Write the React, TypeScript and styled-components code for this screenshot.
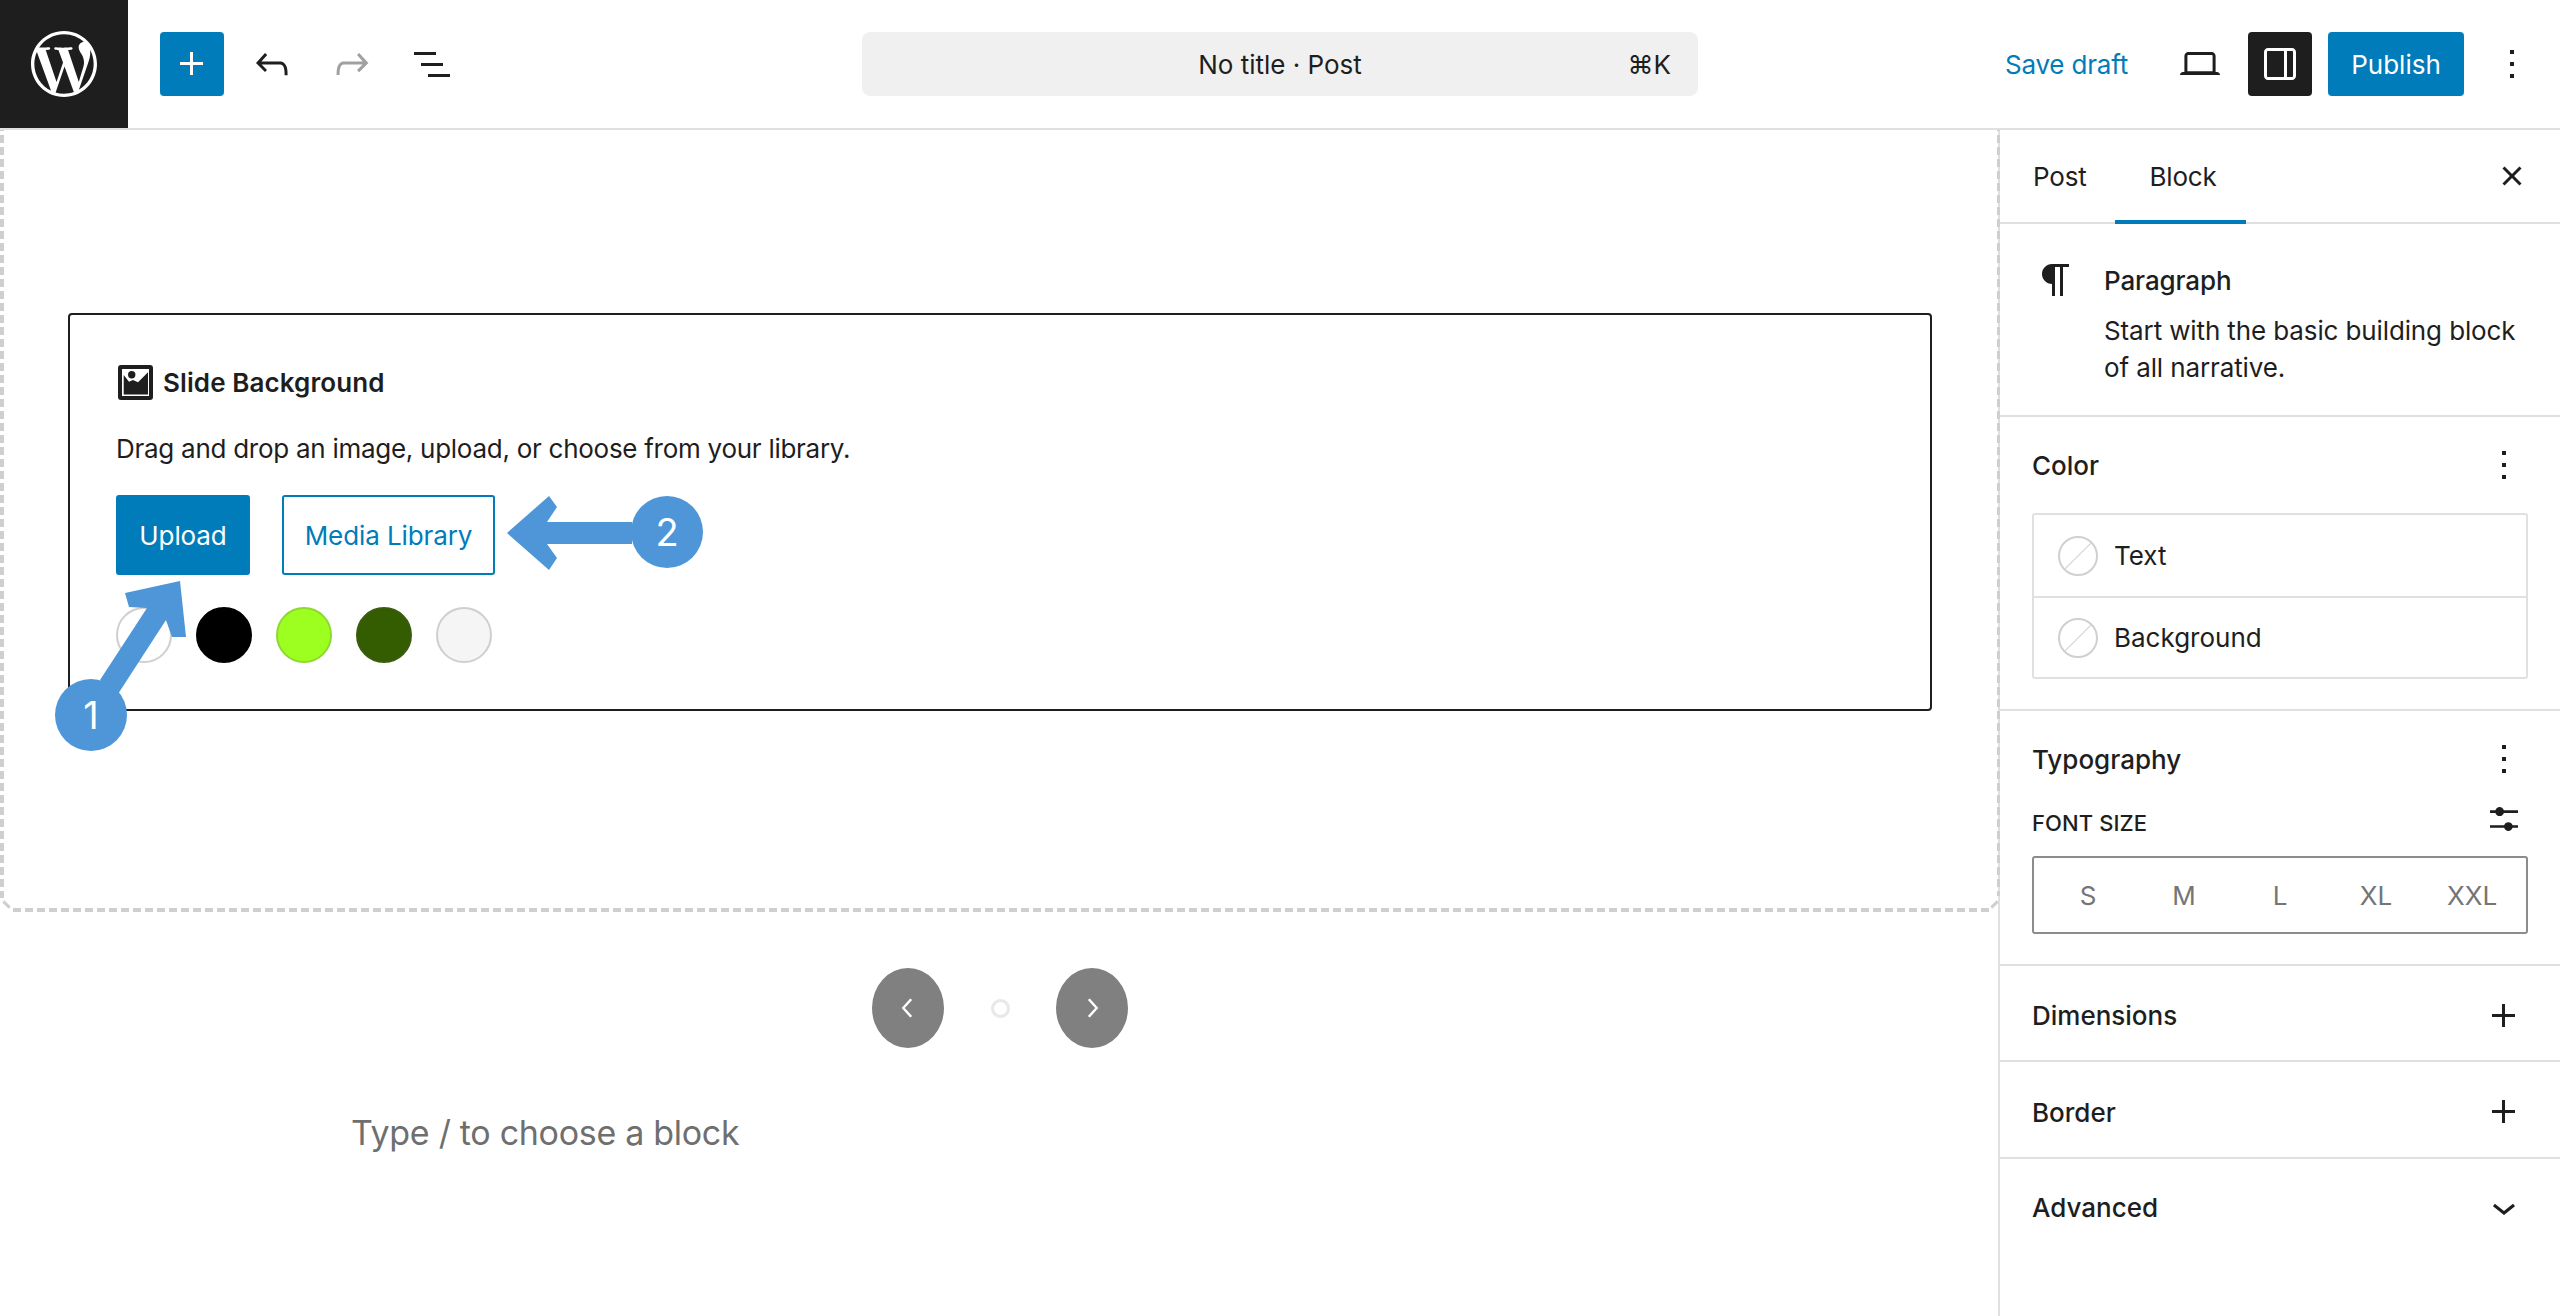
import React from 'react'
import styled, { createGlobalStyle } from 'styled-components'
import { SiWordpress } from 'react-icons/si'

const GlobalStyle = createGlobalStyle`
  html, body {
    margin: 0;
    width: 2560px;
    height: 1316px;
    overflow: hidden;
    background: #fff;
    color: #1e1e1e;
    font-family: Inter, "Liberation Sans", sans-serif;
    font-size: 26px;
  }
  * { box-sizing: border-box; }
`

const BLUE = '#007cba'
const DARK = '#1e1e1e'
const LINE = '#e0e0e0'
const DASH = '#cfcfcf'
const ANNOTATION = '#4e96d8'

const Page = styled.div`
  position: relative;
  width: 2560px;
  height: 1316px;
  display: grid;
  grid-template-rows: 130px 1fr;
  overflow: hidden;
`

const Header = styled.header`
  display: grid;
  grid-template-columns: 1fr 836px 1fr;
  align-items: center;
  border-bottom: 2px solid ${LINE};
`

const HeaderLeft = styled.div`
  display: flex;
  align-items: center;
  gap: 32px;
`

const HeaderRight = styled.div`
  display: flex;
  align-items: center;
  justify-content: flex-end;
  gap: 16px;
  padding-right: 16px;
`

const LogoBox = styled.div`
  width: 128px;
  height: 128px;
  background: ${DARK};
  color: #fff;
  display: flex;
  align-items: center;
  justify-content: center;
  font-size: 66px;
`

const ToolGroup = styled.div`
  display: flex;
  gap: 16px;
`

const IconButton = styled.button<{ $variant?: 'primary' | 'dark' | 'plain' }>`
  width: 64px;
  height: 64px;
  padding: 0;
  border: 0;
  border-radius: 4px;
  display: flex;
  align-items: center;
  justify-content: center;
  background: ${p => (p.$variant === 'primary' ? BLUE : p.$variant === 'dark' ? DARK : 'transparent')};
  color: ${p => (p.$variant === 'primary' || p.$variant === 'dark' ? '#fff' : DARK)};
`

const Glyph = styled.svg<{ $size?: number; $muted?: boolean }>`
  width: ${p => p.$size ?? 48}px;
  height: ${p => p.$size ?? 48}px;
  flex: none;
  display: block;
  fill: currentColor;
  color: ${p => (p.$muted ? '#a0a0a0' : 'inherit')};
`

const CommandCenter = styled.div`
  position: relative;
  height: 64px;
  border-radius: 8px;
  background: #f0f0f0;
  display: flex;
  align-items: center;
  justify-content: center;
  font-size: 26px;
`

const Shortcut = styled.span`
  position: absolute;
  right: 27px;
  top: 50%;
  transform: translateY(-50%);
`

const SaveDraft = styled.span`
  color: ${BLUE};
  padding: 0 24px;
  font-size: 26px;
  letter-spacing: -0.2px;
`

const PublishButton = styled.button`
  width: 136px;
  height: 64px;
  border: 0;
  border-radius: 4px;
  background: ${BLUE};
  color: #fff;
  font: inherit;
  font-size: 26px;
  padding: 0;
`

const Body = styled.div`
  display: grid;
  grid-template-columns: 1998px 562px;
  min-height: 0;
`

const Canvas = styled.main`
  display: flex;
  flex-direction: column;
  min-width: 0;
`

const SlideFrame = styled.section`
  position: relative;
  z-index: 1;
  flex: none;
  width: 2000px;
  height: 782px;
  padding: 183px 68px 0 68px;
  background:
    repeating-linear-gradient(to bottom, ${DASH} 0 1px, transparent 1px 5px, ${DASH} 5px 12px) left top / 4px calc(100% - 14px) no-repeat,
    repeating-linear-gradient(to bottom, ${DASH} 0 1px, transparent 1px 5px, ${DASH} 5px 12px) right top / 3px calc(100% - 16px) no-repeat,
    repeating-linear-gradient(to right, ${DASH} 0 8px, transparent 8px 12px) 13px bottom / calc(100% - 23px) 4px no-repeat;

  &::before, &::after {
    content: '';
    position: absolute;
    bottom: 6px;
    width: 9px;
    height: 3px;
    background: ${DASH};
  }
  &::before { left: 2px; transform: rotate(45deg); }
  &::after { right: 1px; transform: rotate(-45deg); }
`

const SlideCard = styled.div`
  height: 398px;
  border: 2px solid ${DARK};
  border-radius: 4px;
  background: #fff;
  padding: 47px 46px 0;
`

const CardTitle = styled.div`
  display: flex;
  align-items: center;
  gap: 10px;
  height: 40px;
  padding-left: 2px;
  font-weight: 600;
  font-size: 26px;
  letter-spacing: 0.1px;
`

const CardText = styled.p`
  margin: 27px 0 26px;
  line-height: 40px;
  font-size: 26px;
  letter-spacing: -0.27px;
`

const CardActions = styled.div`
  display: flex;
  gap: 32px;
`

const ActionButton = styled.button<{ $outline?: boolean }>`
  height: 80px;
  padding: 0;
  width: ${p => (p.$outline ? 213 : 134)}px;
  border-radius: 3px;
  font: inherit;
  font-size: 26px;
  letter-spacing: -0.1px;
  border: ${p => (p.$outline ? `2px solid ${BLUE}` : '0')};
  background: ${p => (p.$outline ? '#fff' : BLUE)};
  color: ${p => (p.$outline ? BLUE : '#fff')};
`

const Swatches = styled.div`
  display: flex;
  gap: 24px;
  margin-top: 32px;
`

const Swatch = styled.span<{ $fill: string; $edge: string }>`
  width: 56px;
  height: 56px;
  border-radius: 50%;
  background: ${p => p.$fill};
  border: 2px solid ${p => p.$edge};
`

const SliderNav = styled.nav`
  display: flex;
  align-items: center;
  width: 256px;
  height: 80px;
  margin: 56px 0 0 872px;
  justify-content: space-between;
`

const RoundButton = styled.button`
  width: 72px;
  height: 80px;
  padding: 0;
  border: 0;
  border-radius: 50%;
  background: #808080;
  color: #fff;
  display: flex;
  align-items: center;
  justify-content: center;
`

const Dot = styled.span`
  width: 19px;
  height: 19px;
  border-radius: 50%;
  border: 3px solid #e8e8e8;
`

const Placeholder = styled.p`
  margin: 61px 0 0 351px;
  line-height: 48px;
  font-size: 34px;
  letter-spacing: -0.3px;
  color: #6f6f6f;
`

const Sidebar = styled.aside`
  border-left: 2px solid ${LINE};
  min-height: 0;
`

const Tabs = styled.div`
  display: flex;
  align-items: flex-start;
  height: 94px;
  border-bottom: 2px solid ${LINE};
  padding-left: 1px;
  letter-spacing: -0.2px;
`

const Tab = styled.div<{ $active?: boolean }>`
  display: flex;
  align-items: center;
  padding: ${p => (p.$active ? '2px 29px 0 35px' : '0 28px 0 32px')};
  height: ${p => (p.$active ? 94 : 92)}px;
  border-bottom: ${p => (p.$active ? `4px solid ${BLUE}` : '0')};
`

const TabClose = styled(IconButton)`
  margin: 14px 16px 0 auto;
`

const BlockCard = styled.div`
  display: flex;
  gap: 24px;
  height: 193px;
  padding: 32px 32px 0;
  border-bottom: 2px solid ${LINE};
`

const BlockInfo = styled.div`
  line-height: 37px;
  padding-top: 6px;
  letter-spacing: -0.12px;
`

const BlockName = styled.div`
  font-weight: 500;
  margin-bottom: 13px;
`

const Panel = styled.section<{ $height: number }>`
  height: ${p => p.$height}px;
  padding: 0 32px;
  border-bottom: 2px solid ${LINE};
`

const PanelHeader = styled.div<{ $height: number }>`
  display: flex;
  align-items: center;
  justify-content: space-between;
  height: ${p => p.$height}px;
  font-weight: 500;
`

const CollapsedHeader = styled(PanelHeader)`
  padding-top: 5px;
`

const LastHeader = styled(PanelHeader)`
  padding: 0 32px;
`

const PanelAction = styled.div`
  width: 48px;
  height: 48px;
  display: flex;
  align-items: center;
  justify-content: center;
  color: ${DARK};
`

const SliderAction = styled(PanelAction)`
  margin-top: -8px;
`

const ColorList = styled.div`
  border: 2px solid ${LINE};
  border-radius: 3px;
`

const ColorRow = styled.div`
  display: flex;
  align-items: center;
  gap: 16px;
  height: 81px;
  padding-left: 24px;

  & + & { border-top: 2px solid ${LINE}; }
`

const EmptySwatch = styled.span`
  position: relative;
  width: 40px;
  height: 40px;
  border-radius: 50%;
  border: 2px solid #d0d0d0;
  overflow: hidden;

  &::after {
    content: '';
    position: absolute;
    left: 50%;
    top: 50%;
    width: 48px;
    height: 1px;
    background: #d0d0d0;
    transform: translate(-50%, -50%) rotate(-45deg);
  }
`

const FontLabelRow = styled.div`
  display: flex;
  align-items: center;
  justify-content: space-between;
  height: 32px;
  font-size: 22px;
  font-weight: 500;
  letter-spacing: 0.1px;
  text-transform: uppercase;
`

const SizePicker = styled.div`
  display: grid;
  grid-template-columns: repeat(5, 96px);
  align-items: center;
  height: 78px;
  margin-top: 17px;
  padding-left: 6px;
  border: 2px solid #8c8c8c;
  border-radius: 3px;
`

const SizeOption = styled.span`
  text-align: center;
  color: #757575;
  font-size: 26px;
`

const ArrowOne = styled.svg`
  position: absolute;
  left: 90px;
  top: 570px;
  width: 110px;
  height: 130px;
  fill: ${ANNOTATION};
  z-index: 2;
`

const ArrowTwo = styled.svg`
  position: absolute;
  left: 500px;
  top: 490px;
  width: 140px;
  height: 90px;
  fill: ${ANNOTATION};
  z-index: 2;
`

const Badge = styled.span<{ $left: number; $top: number }>`
  position: absolute;
  left: ${p => p.$left}px;
  top: ${p => p.$top}px;
  z-index: 2;
  width: 72px;
  height: 72px;
  border-radius: 50%;
  background: ${ANNOTATION};
  color: #fff;
  font-size: 38px;
  display: flex;
  align-items: center;
  justify-content: center;
`

const paths = {
  plus: 'M11 12.5V17.5H12.5V12.5H17.5V11H12.5V6H11V11H6V12.5H11Z',
  undo: 'M18.3 11.7c-.6-.6-1.4-.9-2.3-.9H6.7l2.9-3.3-1.1-1-4.5 5L8.5 16l1-1-2.7-2.7H16c.5 0 .9.2 1.3.5 1 1 1 3.4 1 4.5v.3h1.5v-.2c0-1.5 0-4.3-1.5-5.7z',
  redo: 'M15.6 6.5l-1.1 1 2.9 3.3H8c-.9 0-1.7.3-2.3.9-1.4 1.5-1.4 4.2-1.4 5.6v.2h1.5v-.3c0-1.1 0-3.5 1-4.5.3-.3.7-.5 1.3-.5h9.2L14.5 15l1.1 1.1 4.6-4.6-4.6-5z',
  list: 'M3 6h11v1.5H3V6Zm3.5 5.5h11V13h-11v-1.5ZM21 17H10v1.5h11V17Z',
  laptop: 'M20.5 16h-.7V8c0-1.1-.9-2-2-2H6.2c-1.1 0-2 .9-2 2v8h-.7c-.8 0-1.5.7-1.5 1.5h20c0-.8-.7-1.5-1.5-1.5zM5.7 8c0-.3.2-.5.5-.5h11.6c.3 0 .5.2.5.5v7.6H5.7V8z',
  drawer: 'M18 4H6c-1.1 0-2 .9-2 2v12c0 1.1.9 2 2 2h12c1.1 0 2-.9 2-2V6c0-1.1-.9-2-2-2zm-4 14.5H6c-.3 0-.5-.2-.5-.5V6c0-.3.2-.5.5-.5h8v13zm4.5-.5c0 .3-.2.5-.5.5h-2.5v-13H18c.3 0 .5.2.5.5v12z',
  more: 'M13 19h-2v-2h2v2zm0-6h-2v-2h2v2zm0-6h-2V5h2v2z',
  close: 'M12 13.06l3.712 3.713 1.061-1.06L13.061 12l3.712-3.712-1.06-1.06L12 10.938 8.288 7.227l-1.061 1.06L10.939 12l-3.712 3.712 1.06 1.061L12 13.061z',
  paragraph: 'm9.99609 14v-.2251l.00391.0001v6.225h1.5v-14.5h2.5v14.5h1.5v-14.5h3v-1.5h-8.50391c-2.76142 0-5 2.23858-5 5 0 2.7614 2.23858 5 5 5z',
  sliders: 'M14.5 13.8c-1.1 0-2.1.7-2.4 1.8H4V17h8.1c.3 1 1.3 1.8 2.4 1.8s2.1-.7 2.4-1.8H20v-1.5h-3.1c-.3-1-1.3-1.7-2.4-1.7zM11.9 7c-.3-1-1.3-1.8-2.4-1.8S7.4 6 7.1 7H4v1.5h3.1c.3 1 1.3 1.8 2.4 1.8s2.1-.7 2.4-1.8H20V7h-8.1z',
  chevronDown: 'M17.5 11.6L12 16l-5.5-4.4.9-1.2L12 14l4.5-3.6 1 1.2z',
  chevronLeft: 'M14.6 7l-1.2-1L8 12l5.4 6 1.2-1-4.6-5z',
  chevronRight: 'M10.6 6L9.4 7l4.6 5-4.6 5 1.2 1 5.4-6z',
}

type IconProps = { name: keyof typeof paths; size?: number; muted?: boolean }

const Icon = ({ name, size, muted }: IconProps) => (
  <Glyph viewBox="0 0 24 24" $size={size} $muted={muted}>
    <path d={paths[name]} />
  </Glyph>
)

const BackgroundIcon = () => (
  <Glyph viewBox="0 0 35 35" $size={35}>
    <path fillRule="evenodd" d="M3 0h29a3 3 0 0 1 3 3v29a3 3 0 0 1-3 3H3a3 3 0 0 1-3-3V3a3 3 0 0 1 3-3Zm1 4v27h27V4H4Z" />
    <circle cx="13.7" cy="9.7" r="3.7" />
    <path d="M5.7 10 11 16.7l4-1.7 5 2.3L30 7.3V29.5H5.7Z" />
  </Glyph>
)

const swatches = [
  { fill: '#ffffff', edge: '#cfcfcf' },
  { fill: '#000000', edge: '#000000' },
  { fill: '#9dff20', edge: '#8fd832' },
  { fill: '#345c00', edge: '#3a5c10' },
  { fill: '#f5f5f5', edge: '#cfcfcf' },
]

const App = () => (
  <Page>
    <GlobalStyle />
    <Header>
      <HeaderLeft>
        <LogoBox>
          <SiWordpress />
        </LogoBox>
        <ToolGroup>
          <IconButton $variant="primary"><Icon name="plus" /></IconButton>
          <IconButton><Icon name="undo" /></IconButton>
          <IconButton><Icon name="redo" muted /></IconButton>
          <IconButton><Icon name="list" /></IconButton>
        </ToolGroup>
      </HeaderLeft>
      <CommandCenter>
        No title · Post
        <Shortcut>⌘K</Shortcut>
      </CommandCenter>
      <HeaderRight>
        <SaveDraft>Save draft</SaveDraft>
        <IconButton><Icon name="laptop" /></IconButton>
        <IconButton $variant="dark"><Icon name="drawer" /></IconButton>
        <PublishButton>Publish</PublishButton>
        <IconButton><Icon name="more" /></IconButton>
      </HeaderRight>
    </Header>
    <Body>
      <Canvas>
        <SlideFrame>
          <SlideCard>
            <CardTitle><BackgroundIcon />Slide Background</CardTitle>
            <CardText>Drag and drop an image, upload, or choose from your library.</CardText>
            <CardActions>
              <ActionButton>Upload</ActionButton>
              <ActionButton $outline>Media Library</ActionButton>
            </CardActions>
            <Swatches>
              {swatches.map(s => <Swatch key={s.fill} $fill={s.fill} $edge={s.edge} />)}
            </Swatches>
          </SlideCard>
        </SlideFrame>
        <SliderNav>
          <RoundButton><Icon name="chevronLeft" size={38} /></RoundButton>
          <Dot />
          <RoundButton><Icon name="chevronRight" size={38} /></RoundButton>
        </SliderNav>
        <Placeholder>Type / to choose a block</Placeholder>
      </Canvas>
      <Sidebar>
        <Tabs>
          <Tab>Post</Tab>
          <Tab $active>Block</Tab>
          <TabClose><Icon name="close" /></TabClose>
        </Tabs>
        <BlockCard>
          <Icon name="paragraph" />
          <BlockInfo>
            <BlockName>Paragraph</BlockName>
            Start with the basic building block of all narrative.
          </BlockInfo>
        </BlockCard>
        <Panel $height={294}>
          <PanelHeader $height={96}>
            Color
            <PanelAction><Icon name="more" /></PanelAction>
          </PanelHeader>
          <ColorList>
            <ColorRow><EmptySwatch />Text</ColorRow>
            <ColorRow><EmptySwatch />Background</ColorRow>
          </ColorList>
        </Panel>
        <Panel $height={255}>
          <PanelHeader $height={96}>
            Typography
            <PanelAction><Icon name="more" /></PanelAction>
          </PanelHeader>
          <FontLabelRow>
            Font size
            <SliderAction><Icon name="sliders" size={42} /></SliderAction>
          </FontLabelRow>
          <SizePicker>
            <SizeOption>S</SizeOption>
            <SizeOption>M</SizeOption>
            <SizeOption>L</SizeOption>
            <SizeOption>XL</SizeOption>
            <SizeOption>XXL</SizeOption>
          </SizePicker>
        </Panel>
        <Panel $height={96}>
          <CollapsedHeader $height={94}>
            Dimensions
            <PanelAction><Icon name="plus" /></PanelAction>
          </CollapsedHeader>
        </Panel>
        <Panel $height={97}>
          <CollapsedHeader $height={95}>
            Border
            <PanelAction><Icon name="plus" /></PanelAction>
          </CollapsedHeader>
        </Panel>
        <LastHeader $height={96}>
          Advanced
          <PanelAction><Icon name="chevronDown" /></PanelAction>
        </LastHeader>
      </Sidebar>
    </Body>
    <ArrowOne viewBox="90 570 110 130">
      <path d="M180 581 125 593l4 14 18 1-47 72 18 14 48-74 6 17h14Z" />
    </ArrowOne>
    <Badge $left={55} $top={679}>1</Badge>
    <ArrowTwo viewBox="500 490 140 90">
      <path d="M507 533 549 496l8 11-10 15h85v22h-85l10 14-8 12Z" />
    </ArrowTwo>
    <Badge $left={631} $top={496}>2</Badge>
  </Page>
)

export default App
